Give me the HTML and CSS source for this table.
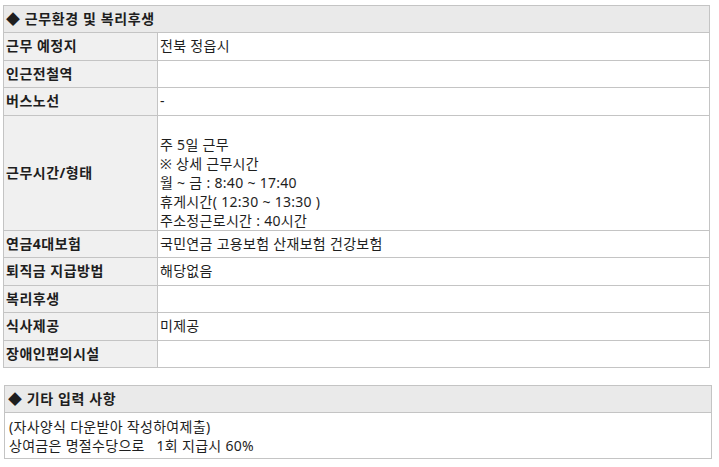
FILE: index.html
```html
<!DOCTYPE html>
<html lang="ko">
<head>
<meta charset="utf-8">
<link rel="stylesheet" href="styles.css">
</head>
<body>
<div class="page">
  <table class="info">
    <colgroup><col class="c-label"><col></colgroup>
    <tr><th colspan="2" class="head">◆ 근무환경 및 복리후생</th></tr>
    <tr><td class="label">근무 예정지</td><td class="val">전북 정읍시</td></tr>
    <tr><td class="label">인근전철역</td><td class="val"></td></tr>
    <tr><td class="label">버스노선</td><td class="val">-</td></tr>
    <tr><td class="label">근무시간/형태</td><td class="val multi">주 5일 근무<br>※ 상세 근무시간<br>월 ~ 금 : 8:40 ~ 17:40<br>휴게시간( 12:30 ~ 13:30 )<br>주소정근로시간 : 40시간</td></tr>
    <tr><td class="label">연금4대보험</td><td class="val">국민연금 고용보험 산재보험 건강보험</td></tr>
    <tr><td class="label">퇴직금 지급방법</td><td class="val">해당없음</td></tr>
    <tr><td class="label">복리후생</td><td class="val"></td></tr>
    <tr><td class="label">식사제공</td><td class="val">미제공</td></tr>
    <tr><td class="label">장애인편의시설</td><td class="val"></td></tr>
  </table>

  <table class="info etc">
    <tr><th class="head">◆ 기타 입력 사항</th></tr>
    <tr><td class="val body">(자사양식 다운받아 작성하여제출)<br>상여금은 명절수당으로 &nbsp;&nbsp;1회 지급시 60%</td></tr>
  </table>
</div>
</body>
</html>
```

FILE: styles.css
```css
html, body {
  margin: 0;
  padding: 0;
  background: #ffffff;
}
.page {
  padding: 5px 0 0 3px;
  font-family: "Noto Sans", "Noto Sans CJK KR", sans-serif;
  font-size: 14px;
  color: #1e1e1e;
}
.info {
  border-collapse: collapse;
  width: 707px;
  table-layout: fixed;
}
.c-label { width: 154px; }
.info th, .info td {
  border: 1px solid #c4c4c4;
  height: 27.5px;
  box-sizing: border-box;
  line-height: 18px;
  padding: 0 2px;
  text-align: left;
  vertical-align: middle;
  white-space: nowrap;
}
.info .head {
  height: 27px;
  background: #eaeaea;
  font-weight: bold;
  letter-spacing: 0.6px;
  padding-left: 2px;
}
.info .label {
  background: #f0f0f0;
  font-weight: bold;
  letter-spacing: 0.5px;
}
.info .val {
  background: #fff;
  font-weight: normal;
  letter-spacing: 0.3px;
}
.info .multi {
  line-height: 19px;
  padding-top: 19px;
  padding-bottom: 0;
}
.etc {
  margin-top: 17px;
  margin-left: 1px;
  width: 708px;
}
.etc .head { padding-left: 3px; }
.etc .body {
  line-height: 19px;
  padding: 4px 4px 3px;
}
```
